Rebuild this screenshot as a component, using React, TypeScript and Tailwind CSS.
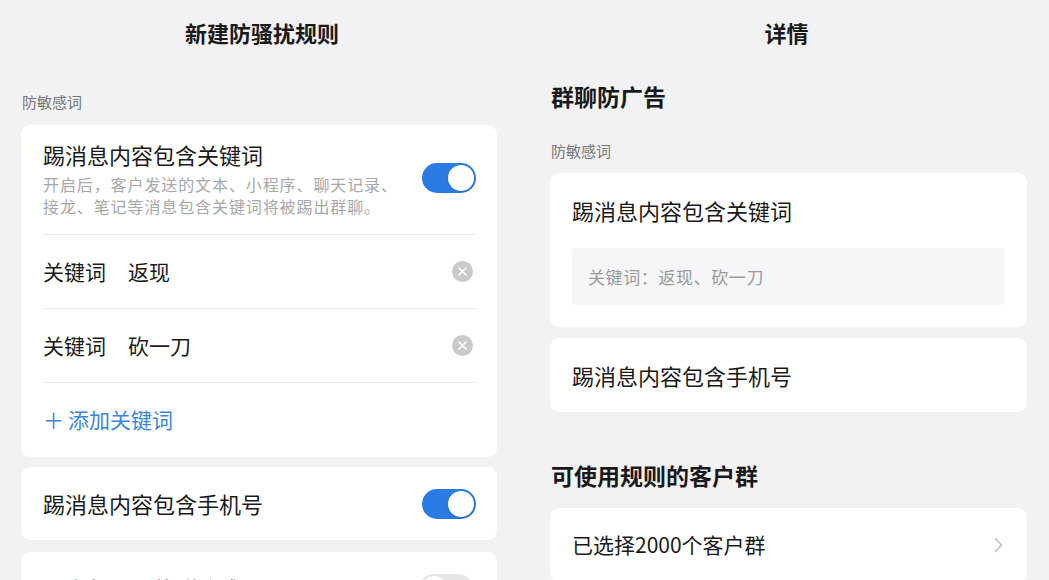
import React from "react";

const font = { fontFamily: '"Noto Sans CJK SC", "Noto Sans", sans-serif' };

function Toggle({ on }: { on: boolean }) {
  return (
    <div
      className={
        on
          ? "w-[54px] h-[30px] rounded-full bg-[#2b7be4] p-[2px] flex justify-end shrink-0"
          : "w-[54px] h-[30px] rounded-full bg-[#e6e6e9] p-[2px] flex justify-start shrink-0"
      }
    >
      <div className="w-[26px] h-[26px] rounded-full bg-white shadow-[0_1px_2px_rgba(0,0,0,0.15)]" />
    </div>
  );
}

function ClearIcon() {
  return (
    <div className="w-[21px] h-[21px] rounded-full bg-[#cacacc] flex items-center justify-center mr-[3px]">
      <svg width="9" height="9" viewBox="0 0 9 9">
        <path d="M1 1 L8 8 M8 1 L1 8" stroke="white" strokeWidth="1.6" strokeLinecap="round" />
      </svg>
    </div>
  );
}

export default function App() {
  return (
    <div
      className="w-[1049px] h-[580px] overflow-hidden bg-[#f2f2f4] flex items-start text-[#1a1a1a]"
      style={font}
    >
      {/* Left */}
      <div className="w-[524px] shrink-0 flex flex-col">
        <div className="shrink-0 h-[64px] flex items-center justify-center text-[22px] font-bold leading-none">
          新建防骚扰规则
        </div>
        <div className="shrink-0 pl-[22px] mt-[28px] h-[20px] leading-[20px] text-[15px] text-[#777]">
          防敏感词
        </div>
        <div className="shrink-0 ml-[21px] w-[476px] mt-[13px] bg-white rounded-[9px] pl-[22px] pr-[21px]">
          <div className="flex items-center justify-between pt-[14px] pb-[17px]">
            <div>
              <div className="text-[22px] leading-[30px]">踢消息内容包含关键词</div>
              <div className="mt-[4px] text-[16px] leading-[22px] text-[#a8a8a8] tracking-[0.9px]">
                开启后，客户发送的文本、小程序、聊天记录、
                <br />
                接龙、笔记等消息包含关键词将被踢出群聊。
              </div>
            </div>
            <Toggle on />
          </div>
          <div className="h-[74px] border-t border-[#ededed] flex items-center justify-between">
            <div className="text-[21px] flex gap-[22px]">
              <span>关键词</span>
              <span>返现</span>
            </div>
            <ClearIcon />
          </div>
          <div className="h-[74px] border-t border-[#ededed] flex items-center justify-between">
            <div className="text-[21px] flex gap-[22px]">
              <span>关键词</span>
              <span>砍一刀</span>
            </div>
            <ClearIcon />
          </div>
          <div className="h-[75px] border-t border-[#ededed] flex items-center text-[21px] text-[#3a86dc]">
            <span className="mr-[4px]">＋</span>
            <span>添加关键词</span>
          </div>
        </div>
        <div className="shrink-0 ml-[21px] w-[476px] mt-[10px] h-[73px] bg-white rounded-[9px] pl-[22px] pr-[21px] flex items-center justify-between">
          <div className="text-[22px]">踢消息内容包含手机号</div>
          <Toggle on />
        </div>
        <div className="shrink-0 ml-[21px] w-[476px] mt-[12px] h-[73px] bg-white rounded-[9px] pl-[22px] pr-[24px] flex items-center justify-between">
          <div className="text-[22px]">踢高频刷屏的群聊成员</div>
          <Toggle on={false} />
        </div>
      </div>

      {/* Right */}
      <div className="flex-1 flex flex-col">
        <div className="shrink-0 h-[64px] flex items-center justify-center text-[22px] font-bold leading-none">
          详情
        </div>
        <div className="shrink-0 pl-[27px] mt-[16px] h-[32px] leading-[32px] text-[23px] font-bold">
          群聊防广告
        </div>
        <div className="shrink-0 pl-[27px] mt-[29px] h-[20px] leading-[20px] text-[15px] text-[#777]">
          防敏感词
        </div>
        <div className="shrink-0 ml-[26px] w-[477px] mt-[12px] bg-white rounded-[9px] px-[22px] pt-[23px] pb-[22px]">
          <div className="text-[22px] leading-[28px]">踢消息内容包含关键词</div>
          <div className="mt-[24px] h-[57px] bg-[#f6f6f8] rounded-[4px] flex items-center pl-[16px] text-[17px] text-[#9a9a9a] tracking-[0.6px]">
            关键词：返现、砍一刀
          </div>
        </div>
        <div className="shrink-0 ml-[26px] w-[477px] mt-[11px] h-[74px] bg-white rounded-[9px] px-[22px] flex items-center text-[22px]">
          踢消息内容包含手机号
        </div>
        <div className="shrink-0 pl-[27px] mt-[47px] h-[32px] leading-[32px] text-[23px] font-bold">
          可使用规则的客户群
        </div>
        <div className="shrink-0 ml-[26px] w-[477px] mt-[17px] h-[74px] bg-white rounded-[9px] pl-[22px] pr-[24px] flex items-center justify-between">
          <div className="text-[21px]">已选择2000个客户群</div>
          <svg width="9" height="16" viewBox="0 0 9 16">
            <path d="M1.5 1.5 L7.5 8 L1.5 14.5" fill="none" stroke="#c2c2c4" strokeWidth="1.6" strokeLinecap="round" strokeLinejoin="round" />
          </svg>
        </div>
      </div>
    </div>
  );
}
